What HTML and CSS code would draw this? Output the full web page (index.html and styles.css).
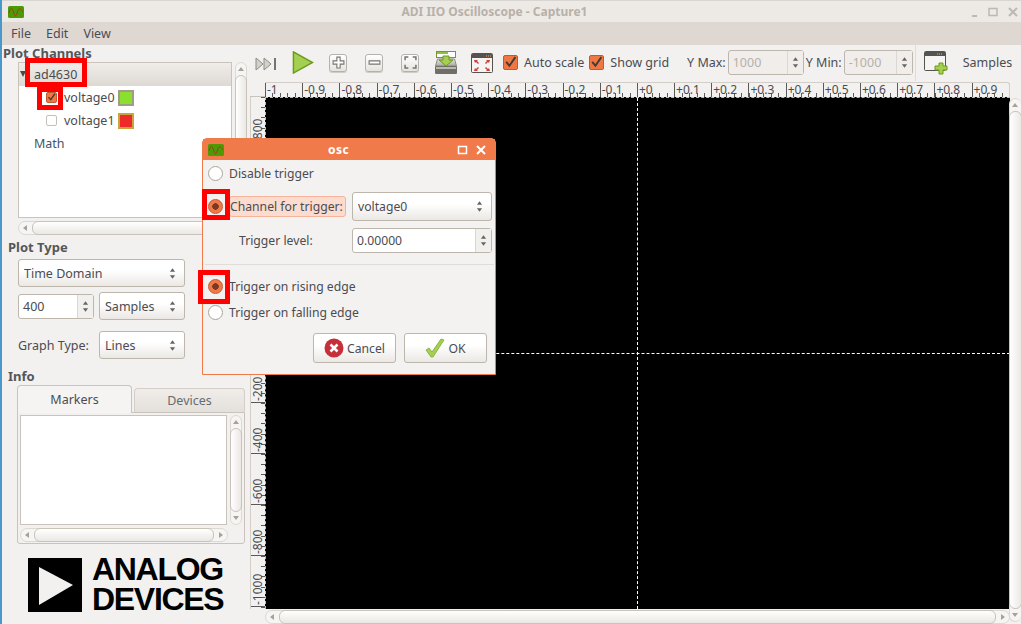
FILE: index.html
```html
<!DOCTYPE html>
<html lang="en">
<head>
    <meta charset="UTF-8">
    <title>ADI IIO Oscilloscope - Capture1</title>
    <link rel="stylesheet" href="styles.css">
</head>
<body>
<div class="window">
    <div class="titlebar">
        <svg class="app-icon" viewBox="0 0 16 12"><rect width="16" height="12" rx="1.5" fill="#4e9a06"/><path d="M1 7C3 1 4 1 5.5 6S8 11 9.500 6 12 2 15 6" fill="none" stroke="#a33c1a" stroke-width="1"/></svg>
        <span class="title-text">ADI IIO Oscilloscope - Capture1</span>
        <div class="win-controls">
            <svg viewBox="0 0 50 12"><path d="M1 10h5" stroke="#bdb8b1" stroke-width="2"/><path d="M18 2.500h8v7h-8z" fill="none" stroke="#bdb8b1" stroke-width="1.500"/><path d="M38 2l8 8M46 2l-8 8" stroke="#bdb8b1" stroke-width="2"/></svg>
        </div>
    </div>
    <div class="menubar"><span>File</span><span>Edit</span><span>View</span></div>

    <div class="content">
        <div class="sidebar">
            <h3 class="group-title first">Plot Channels</h3>
            <div class="tree-wrap">
                <div class="tree">
                    <div class="tree-head"><i class="expander"></i>ad4630</div>
                    <div class="tree-row"><input type="checkbox" checked><span>voltage0</span><i class="swatch green"></i></div>
                    <div class="tree-row"><input type="checkbox"><span>voltage1</span><i class="swatch red"></i></div>
                    <div class="tree-math">Math</div>
                </div>
                <div class="vbar tree-vbar"><i class="thumb"></i></div>
            </div>
            <div class="hbar tree-hbar"><i class="thumb"></i></div>

            <h3 class="group-title">Plot Type</h3>
            <div class="type-box">
                <select class="combo"><option>Time Domain</option></select>
                <div class="type-row">
                    <div class="spin samples-spin"><input value="400"><span class="spin-btn"></span></div>
                    <select class="combo small"><option>Samples</option></select>
                </div>
                <div class="type-row graph-row">
                    <label>Graph Type:</label>
                    <select class="combo small"><option>Lines</option></select>
                </div>
            </div>

            <h3 class="group-title info">Info</h3>
            <div class="tabs"><span class="tab active">Markers</span><span class="tab">Devices</span></div>
            <div class="tab-body">
                <div class="tab-view">
                    <div class="textview"></div>
                    <div class="vbar info-vbar"><i class="thumb"></i></div>
                </div>
                <div class="hbar info-hbar"><i class="thumb"></i></div>
            </div>

            <div class="logo">
                <svg class="logo-mark" viewBox="0 0 54 54"><rect width="54" height="54" fill="#000"/><path d="M11 9L45 27 11 47z" fill="#f2f1ef"/></svg>
                <div class="logo-text"><div>ANALOG</div><div>DEVICES</div></div>
            </div>
        </div>

        <div class="main">
            <div class="toolbar">
                <svg class="tool skip" viewBox="0 0 22 14"><path d="M1 1l7 6-7 6zM9 1l7 6-7 6z" fill="#d4d1cb" stroke="#8d8a84"/><path d="M19 1v12h2V1z" fill="#77746f"/></svg>
                <svg class="tool play" viewBox="0 0 22 24"><path d="M1 1l20 11L1 23z" fill="#a4cf4f" stroke="#6b9a1f" stroke-width="1.500"/></svg>
                <span class="tool-btn plus"><svg viewBox="0 0 12 12"><path d="M4.500 1h3v3.500H11v3H7.500V11h-3V7.500H1v-3h3.500z" fill="#fff" stroke="#77746f"/></svg></span>
                <span class="tool-btn minus"><svg viewBox="0 0 12 12"><path d="M1 4.500h10v3H1z" fill="#fff" stroke="#77746f"/></svg></span>
                <span class="tool-btn fit"><svg viewBox="0 0 12 12"><path d="M1 4V1h3M8 1h3v3M1 8v3h3M8 11h3V8" fill="none" stroke="#77746f" stroke-width="1.400"/></svg></span>
                <svg class="tool save" viewBox="0 0 24 24"><defs><linearGradient id="disk" x1="0" y1="0" x2="0" y2="1"><stop offset="0" stop-color="#e8e7e2"/><stop offset="1" stop-color="#a9a8a2"/></linearGradient></defs><path d="M1.500 15l2-7h17l2 7z" fill="url(#disk)" stroke="#8d8a84"/><rect x="1" y="15" width="22" height="8" rx="1" fill="#6f6e68"/><rect x="2" y="16" width="20" height="2" fill="#b9b8b2"/><rect x="2.500" y=".5" width="19" height="6" fill="#fff" stroke="#6f9a2e"/><rect x="3" y="1" width="11" height="2" fill="#8fbf3f"/><path d="M9 5h6v4h4l-7 6-7-6h4z" fill="#a4cf4f" stroke="#6b9a1f"/></svg>
                <svg class="tool full" viewBox="0 0 22 20"><rect x=".5" y=".5" width="21" height="19" rx="1" fill="#f6f4f2" stroke="#55534f"/><rect x="1" y="1" width="20" height="4" fill="#55534f"/><path d="M15 3h1M17 3h1M19 3h1" stroke="#e9b04c"/><path d="M3 7h4l-1 1 2 2-1 1-2-2-1 1zM19 7h-4l1 1-2 2 1 1 2-2 1 1zM3 18h4l-1-1 2-2-1-1-2 2-1-1zM19 18h-4l1-1-2-2 1-1 2 2 1-1z" fill="#c9413a"/></svg>
                <label class="check auto"><input type="checkbox" class="big" checked>Auto scale</label>
                <label class="check grid"><input type="checkbox" class="big" checked>Show grid</label>
                <label class="y-label y-max">Y Max:</label>
                <div class="spin y-spin off"><input value="1000" disabled><span class="spin-btn"></span></div>
                <label class="y-label y-min">Y Min:</label>
                <div class="spin y-spin short off"><input value="-1000" disabled><span class="spin-btn"></span></div>
                <span class="tool-sep"></span>
                <svg class="tool add" viewBox="0 0 24 24"><rect x=".5" y=".5" width="21" height="19" rx="1" fill="#f6f4f2" stroke="#55534f"/><rect x="1" y="1" width="20" height="4" fill="#55534f"/><path d="M13 3h1M15 3h1M17 3h1" stroke="#e9b04c"/><path d="M15 12h4v3h4v4h-4v4h-4v-4h-4v-4h4z" fill="#a4cf4f" stroke="#6b9a1f"/></svg>
                <span class="tool-text">Samples</span>
            </div>

            <div class="plot-area">
                <div class="plot-grid">
                    <div class="corner"></div>
                    <div class="ruler-x">
                        <span>-1</span><span>-0.9</span><span>-0.8</span><span>-0.7</span><span>-0.6</span><span>-0.5</span><span>-0.4</span><span>-0.3</span><span>-0.2</span><span>-0.1</span>
                        <span>+0</span><span>+0.1</span><span>+0.2</span><span>+0.3</span><span>+0.4</span><span>+0.5</span><span>+0.6</span><span>+0.7</span><span>+0.8</span><span>+0.9</span>
                    </div>
                    <div class="ruler-y">
                        <span>+800</span><span>+600</span><span>+400</span><span>+200</span><span>+0</span><span>-200</span><span>-400</span><span>-600</span><span>-800</span><span>-1000</span>
                    </div>
                    <div class="canvas"><i class="axis-v"></i><i class="axis-h"></i></div>
                    <div class="corner-b"></div>
                    <div class="hbar plot-hbar"><i class="thumb"></i></div>
                </div>
                <div class="vbar plot-vbar"><i class="thumb"></i></div>
            </div>
        </div>
    </div>
</div>

<div class="dialog">
    <div class="dialog-title">
        <svg class="app-icon" viewBox="0 0 16 12"><rect width="16" height="12" rx="1.5" fill="#4e9a06"/><path d="M1 7C3 1 4 1 5.5 6S8 11 9.500 6 12 2 15 6" fill="none" stroke="#a33c1a" stroke-width="1"/></svg>
        <span>osc</span>
        <svg class="dialog-controls" viewBox="0 0 30 12"><path d="M1.500 2.500h8v7h-8z" fill="none" stroke="#fff" stroke-width="1.500"/><path d="M20 2l8 8M28 2l-8 8" stroke="#fff" stroke-width="2"/></svg>
    </div>
    <div class="dialog-body">
        <label class="radio-row"><input type="radio" name="mode">Disable trigger</label>
        <div class="field-row">
            <label class="radio-row"><input type="radio" name="mode" checked><span class="hl">Channel for trigger:</span></label>
            <select class="combo wide"><option>voltage0</option></select>
        </div>
        <div class="field-row level-row">
            <label class="level-label">Trigger level:</label>
            <div class="spin level-spin"><input value="0.00000"><span class="spin-btn"></span></div>
        </div>
        <hr class="dialog-sep">
        <label class="radio-row"><input type="radio" name="edge" checked>Trigger on rising edge</label>
        <label class="radio-row falling"><input type="radio" name="edge">Trigger on falling edge</label>
        <div class="dialog-actions">
            <button><svg viewBox="0 0 20 20"><circle cx="10" cy="10" r="9.500" fill="#c62f3a"/><path d="M6.500 6.500l7 7M13.500 6.500l-7 7" stroke="#fff" stroke-width="2.600"/></svg>Cancel</button>
            <button class="ok"><svg viewBox="0 0 20 20"><path d="M1 12l3-2 3 4L16 1l3 1L8 19H6z" fill="#a4cf4f" stroke="#7fa83a" stroke-width=".8"/></svg>OK</button>
        </div>
    </div>
</div>

<div class="mark mark-device"></div>
<div class="mark mark-check"></div>
<div class="mark mark-channel"></div>
<div class="mark mark-rising"></div>
</body>
</html>
```

FILE: styles.css
```css
* {
    box-sizing: border-box;
}

body {
    margin: 0;
    width: 1021px;
    height: 624px;
    overflow: hidden;
    position: relative;
    font-family: "Noto Sans", sans-serif;
    font-size: 12.5px;
    color: #4a4c52;
    background-color: #f2f1ef;
}

input, select, button {
    font: inherit;
    color: inherit;
}

.window {
    height: 624px;
    display: flex;
    flex-direction: column;
    border-left: 2px solid #4a97c9;
}

/* title and menu */
.titlebar {
    height: 22px;
    display: flex;
    align-items: center;
    padding-left: 6px;
    background-color: #edeae6;
    border-top: 1px solid #d8d6d2;
    position: relative;
}

.app-icon {
    width: 16px;
    height: 12px;
}

.title-text {
    flex: 1;
    padding-right: 6px;
    text-align: center;
    font-weight: bold;
    font-size: 12px;
    color: #b8b1a9;
}

.win-controls svg {
    display: block;
    width: 50px;
    height: 12px;
    margin-right: 0;
}

.menubar {
    height: 23px;
    display: flex;
    align-items: center;
    gap: 15px;
    padding-left: 9px;
    background-color: #dfd8d2;
}

.content {
    flex: 1;
    display: flex;
    min-height: 0;
}

/* left column */
.sidebar {
    width: 248px;
    flex: none;
}

.group-title {
    margin: 0 0 0 6px;
    height: 19px;
    line-height: 19px;
    font-size: 13px;
    font-weight: bold;
    color: #55565a;
}

.group-title.first {
    margin-left: 1px;
    height: 17px;
    line-height: 17px;
}

.tree-wrap {
    display: flex;
    margin-left: 16px;
    gap: 3px;
}

.tree {
    width: 214px;
    height: 156px;
    background-color: #fff;
    border: 1px solid #c9c3bb;
}

.tree-head {
    height: 23px;
    display: flex;
    align-items: center;
    padding-left: 15px;
    background: linear-gradient(#f0edea, #ded9d3);
    position: relative;
}

.expander {
    position: absolute;
    left: 1px;
    top: 8px;
    border-left: 3.500px solid transparent;
    border-right: 3.500px solid transparent;
    border-top: 6px solid #4c4a46;
}

.tree-row {
    height: 23px;
    display: flex;
    align-items: center;
    padding-left: 27px;
}

.tree-row span {
    margin-left: 7px;
}

.tree-math {
    padding: 3px 0 0 15px;
    color: #456;
}

input[type="checkbox"] {
    appearance: none;
    margin: 0;
    width: 11px;
    height: 11px;
    flex: none;
    background-color: #fff;
    border: 1px solid #c4bfb8;
    border-radius: 2px;
}

input[type="checkbox"]:checked {
    background-color: #ee7744;
    border-color: #c25a2e;
    background-image: url("data:image/svg+xml;charset=utf-8,%3Csvg xmlns='http://www.w3.org/2000/svg' viewBox='0 0 12 12'%3E%3Cpath d='M2 5.500l3 3.500 5.500-8' fill='none' stroke='%23443a36' stroke-width='1.800'/%3E%3C/svg%3E");
    background-size: 100% 100%;
}

input.big {
    width: 15px;
    height: 15px;
}

.swatch {
    width: 16px;
    height: 16px;
    margin-left: 3px;
    border: 2px solid #a09c86;
}

.swatch.green {
    background-color: #8ae02c;
}

.swatch.red {
    background-color: #ee2b2b;
    border-color: #c9a53c;
}

/* scrollbars */
.vbar, .hbar {
    position: relative;
    background-color: #f6f5f3;
    border: 1px solid #ddd8d2;
    border-radius: 7px;
    flex: none;
}

.vbar {
    width: 12px;
}

.hbar {
    height: 14px;
}

.vbar::before, .vbar::after, .hbar::before, .hbar::after {
    content: "";
    position: absolute;
    border: 3px solid transparent;
}

.vbar::before {
    left: 2px;
    top: 1px;
    border-bottom: 4px solid #a5a19b;
}

.vbar::after {
    left: 2px;
    bottom: 1px;
    border-top: 4px solid #a5a19b;
}

.hbar::before {
    top: 3px;
    left: 1px;
    border-right: 4px solid #a5a19b;
}

.hbar::after {
    top: 3px;
    right: 1px;
    border-left: 4px solid #a5a19b;
}

.thumb {
    position: absolute;
    background: linear-gradient(90deg, #fff, #ebe8e4);
    border: 1px solid #c9c3bb;
    border-radius: 6px;
}

.hbar .thumb {
    top: -1px;
    bottom: -1px;
    left: 13px;
    right: 13px;
    background: linear-gradient(#fff, #ebe8e4);
}

.vbar .thumb {
    left: -1px;
    right: -1px;
    top: 12px;
    bottom: 12px;
}

.tree-vbar {
    height: 156px;
}

.tree-hbar {
    width: 214px;
    margin: 3px 0 3px 16px;
}

/* form controls */
.combo {
    appearance: none;
    height: 28px;
    padding: 0 18px 0 5px;
    background-color: #f4f2f0;
    background-image: url("data:image/svg+xml;charset=utf-8,%3Csvg xmlns='http://www.w3.org/2000/svg' viewBox='0 0 8 14'%3E%3Cpath d='M4 1l3 4H1zM4 13L1 9h6z' fill='%23666'/%3E%3C/svg%3E"), linear-gradient(#fff 40%, #ebe8e4);
    background-repeat: no-repeat;
    background-position: right 8px center, 0 0;
    background-size: 7px 13px, 100% 100%;
    border: 1px solid #bdb6ad;
    border-radius: 3px;
}

.type-box {
    margin: 2px 0 0 16px;
    width: 167px;
}

.type-box > .combo {
    width: 167px;
}

.type-row {
    display: flex;
    align-items: center;
    gap: 5px;
    margin-top: 5px;
}

.small {
    width: 86px;
}

.graph-row {
    margin-top: 11px;
    justify-content: space-between;
}

.spin {
    display: flex;
    height: 25px;
    background-color: #fff;
    border: 1px solid #bdb6ad;
    border-radius: 3px;
}

.spin input {
    flex: 1;
    width: 10px;
    min-width: 0;
    border: 0;
    outline: 0;
    padding: 0 0 0 4px;
    background: transparent;
}

.spin-btn {
    width: 16px;
    flex: none;
    background: #f2f0ed url("data:image/svg+xml;charset=utf-8,%3Csvg xmlns='http://www.w3.org/2000/svg' viewBox='0 0 8 14'%3E%3Cpath d='M4 1l3 4H1zM4 13L1 9h6z' fill='%23666'/%3E%3C/svg%3E") no-repeat center / 7px 13px;
    border-left: 1px solid #dcd7d1;
}

.samples-spin {
    width: 76px;
}

.info {
    margin-top: 8px;
}

.tabs {
    display: flex;
    align-items: flex-end;
    gap: 2px;
    margin-left: 15px;
    height: 26px;
}

.tab {
    width: 111px;
    height: 24px;
    line-height: 24px;
    text-align: center;
    color: #6a6a6e;
    background: linear-gradient(#f0edea, #e4e0db);
    border: 1px solid #d3cec7;
    border-bottom: 0;
    border-radius: 4px 4px 0 0;
}

.tab.active {
    width: 115px;
    height: 28px;
    line-height: 27px;
    color: #4a4c52;
    background: #f5f4f2;
    border-color: #c9c3bb;
    margin-bottom: -1px;
    position: relative;
}

.tab-body {
    margin-left: 15px;
    width: 228px;
    height: 132px;
    padding: 2px;
    border: 1px solid #c9c3bb;
    border-radius: 0 0 3px 3px;
}

.tab-view {
    display: flex;
    gap: 3px;
}

.textview {
    width: 209px;
    height: 110px;
    background-color: #fff;
    border: 1px solid #c9c3bb;
}

.info-vbar {
    height: 110px;
}

.info-hbar {
    margin-top: 3px;
    width: 208px;
}

.logo {
    display: flex;
    gap: 10px;
    margin: 14px 0 0 26px;
}

.logo-mark {
    width: 54px;
    height: 54px;
    flex: none;
}

.logo-text {
    font-family: "Liberation Sans", sans-serif;
    font-size: 32px;
    line-height: 30px;
    font-weight: bold;
    letter-spacing: -1.300px;
    color: #000;
    margin-top: -4px;
}

/* toolbar */
.main {
    flex: 1;
    min-width: 0;
    display: flex;
    flex-direction: column;
}

.toolbar {
    height: 37px;
    display: flex;
    align-items: center;
    position: relative;
    padding: 0 0 2px 5px;
}

.tool {
    flex: none;
}

.skip {
    width: 22px;
    height: 14px;
    margin-top: 2px;
}

.play {
    width: 22px;
    height: 23px;
    margin-left: 15px;
}

.tool-btn {
    width: 18px;
    height: 18px;
    flex: none;
    display: flex;
    align-items: center;
    justify-content: center;
    background: linear-gradient(#fff, #e6e3de);
    border: 1px solid #b5b1ab;
    border-radius: 3px;
    box-shadow: 0 1px 0 #d0ccc6;
}

.tool-btn svg {
    width: 13px;
    height: 13px;
}

.plus {
    margin-left: 15px;
}

.minus, .fit {
    margin-left: 18px;
}

.save {
    width: 24px;
    height: 24px;
    margin-left: 15px;
}

.full {
    width: 22px;
    height: 20px;
    margin-left: 13px;
}

.check {
    display: flex;
    align-items: center;
    gap: 6px;
}

.auto {
    margin-left: 10px;
}

.grid {
    margin-left: 5px;
}

.y-label {
    margin-right: 2px;
}

.y-max {
    margin-left: 18px;
}

.y-min {
    margin-left: 2px;
}

.y-spin {
    width: 76px;
}

.y-spin.short {
    width: 69px;
}

.off {
    background-color: #f0edea;
    color: #b5b1ab;
}

.off .spin-btn {
    background-color: #f0edea;
}

.tool-sep {
    width: 1px;
    height: 37px;
    margin-left: 2px;
    background-color: #dfdbd6;
}

.add {
    width: 24px;
    height: 24px;
    margin-left: 8px;
}

.tool-text {
    margin-left: 15px;
}

/* plot */
.plot-area {
    flex: 1;
    display: flex;
    min-height: 0;
}

.plot-grid {
    flex: 1;
    min-width: 0;
    display: grid;
    grid-template-columns: 15px 745px;
    grid-template-rows: 15px 512px 15px;
}

.corner {
    border-bottom: 1px solid #c9c3bb;
}

.ruler-x {
    display: flex;
    font-size: 12px;
    line-height: 14px;
    border-top: 1px solid #d3cec7;
    border-right: 1px solid #d3cec7;
    border-radius: 0 3px 0 0;
    background: repeating-linear-gradient(90deg, #5a5a5a 0, #5a5a5a 1px, transparent 1px, transparent 7.440px) no-repeat 0 100% / 100% 4px;
}

.ruler-x span {
    flex: none;
    width: 37.200px;
    padding-left: 1px;
    white-space: nowrap;
    border-left: 1px solid #5a5a5a;
}

.ruler-y {
    display: flex;
    flex-direction: column;
    font-size: 12px;
    border-left: 1px solid #d3cec7;
    background: repeating-linear-gradient(180deg, #5a5a5a 0, #5a5a5a 1px, transparent 1px, transparent 10.200px) no-repeat 100% 0 / 4px 100%;
}

.ruler-y span {
    flex: none;
    height: 51px;
    writing-mode: vertical-rl;
    transform: rotate(180deg);
    line-height: 13px;
    padding-top: 1px;
    white-space: nowrap;
    border-top: 1px solid #5a5a5a;
}

.canvas {
    position: relative;
    background-color: #000;
    border-top: 1px dashed #d5d500;
    border-left: 1px dashed #d5d500;
}

.axis-v {
    position: absolute;
    left: 371px;
    top: 0;
    bottom: 0;
    border-left: 1px dashed #fff;
}

.axis-h {
    position: absolute;
    top: 255px;
    left: 0;
    right: 0;
    border-top: 1px dashed #fff;
}

.plot-hbar {
    margin-top: 1px;
}

.plot-vbar {
    margin-top: 16px;
    height: 524px;
    border-right: 0;
}

/* trigger dialog */
.dialog {
    position: absolute;
    left: 202px;
    top: 138px;
    width: 294px;
    height: 237px;
    font-size: 12.2px;
    background-color: #f4f2f0;
    border: 1px solid #ef7a4a;
    border-radius: 5px 5px 0 0;
}

.dialog-title {
    height: 21px;
    display: flex;
    align-items: center;
    padding: 0 8px 0 5px;
    background-color: #f07a49;
    color: #fff;
    font-weight: bold;
    font-size: 12px;
}

.dialog-title span {
    flex: 1;
    text-align: center;
    padding-right: 4px;
    letter-spacing: .5px;
}

.dialog-controls {
    width: 30px;
    height: 12px;
}

.dialog-body {
    padding: 0 3px 0 5px;
}

.radio-row {
    display: flex;
    align-items: center;
    gap: 6px;
    height: 26px;
}

input[type="radio"] {
    appearance: none;
    margin: 0;
    width: 15px;
    height: 15px;
    flex: none;
    border-radius: 50%;
    background-color: #fff;
    border: 1px solid #aaa59e;
}

input[type="radio"]:checked {
    border-color: #c9562b;
    background: radial-gradient(circle, #7a3a22 0, #7a3a22 3px, #f07a49 3.500px);
}

.hl {
    height: 21px;
    line-height: 19px;
    width: 117px;
    white-space: nowrap;
    background-color: #fbdccf;
    border: 1px solid #f5b49a;
    border-radius: 3px;
}

.field-row {
    display: flex;
    align-items: center;
    justify-content: space-between;
    margin-top: 6px;
}

.wide {
    width: 140px;
    height: 29px;
}

.level-row {
    margin-top: 7px;
}

.level-label {
    padding-left: 31px;
}

.level-spin {
    width: 140px;
}

.dialog-sep {
    border: 0;
    border-top: 1px solid #e0dcd7;
    margin: 11px -2px 8px -3px;
}

.dialog-actions {
    display: flex;
    justify-content: flex-end;
    gap: 8px;
    margin-top: 8px;
    padding-right: 5px;
}

button {
    width: 83px;
    height: 30px;
    display: flex;
    align-items: center;
    justify-content: center;
    gap: 3px;
    background: linear-gradient(#fff 40%, #ebe8e4);
    border: 1px solid #bdb6ad;
    border-radius: 3px;
}

button svg {
    width: 20px;
    height: 20px;
}

/* red callouts drawn over the screenshot */
.mark {
    position: absolute;
    border: 5px solid #f00;
}

.mark-device {
    left: 25px;
    top: 58px;
    width: 62px;
    height: 29px;
}

.mark-check {
    left: 37px;
    top: 87px;
    width: 26px;
    height: 23px;
}

.mark-channel {
    left: 202px;
    top: 189px;
    width: 28px;
    height: 31px;
}

.mark-rising {
    left: 198px;
    top: 270px;
    width: 32px;
    height: 34px;
}
```
